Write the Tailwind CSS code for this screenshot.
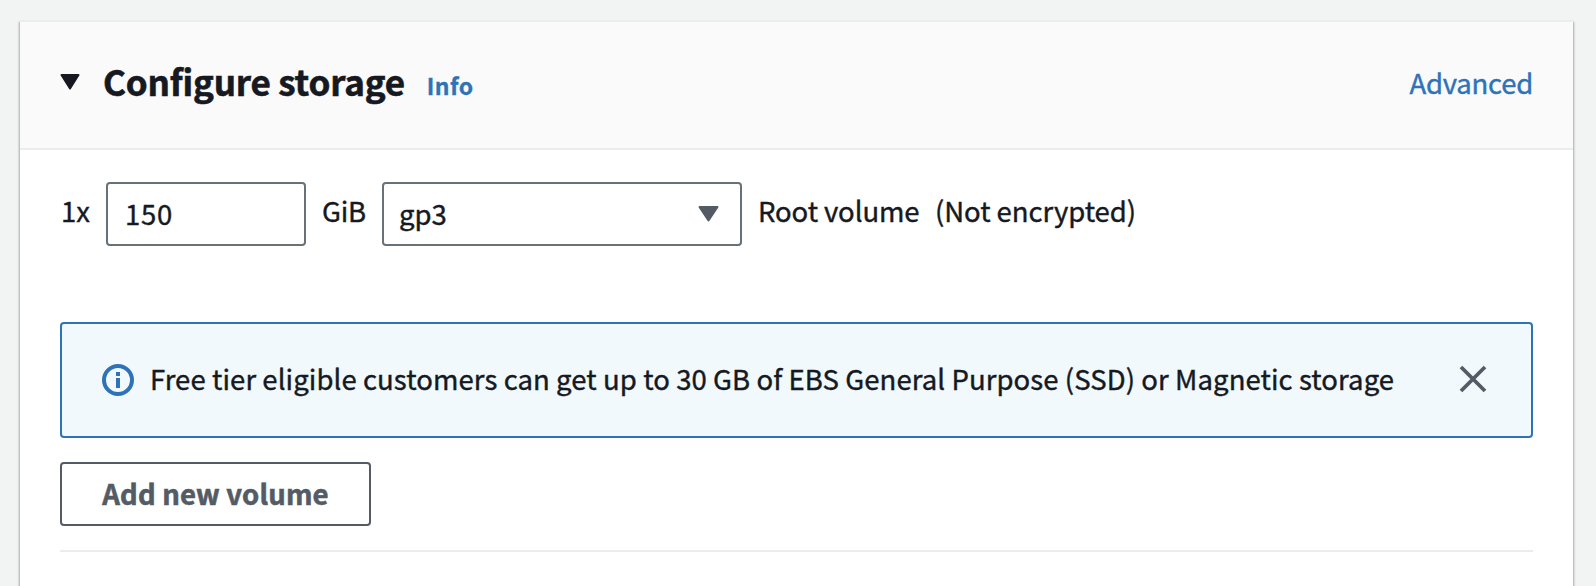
<!DOCTYPE html>
<html lang="en">
<head>
<meta charset="utf-8">
<title>Configure storage</title>
<script src="https://cdn.jsdelivr.net/npm/@tailwindcss/browser@4"></script>
</head>
<body class="h-[586px] overflow-hidden bg-[#f2f3f3] pt-5 pr-[23px] pl-5 font-['Noto_Sans_CJK_SC','Noto_Sans',sans-serif] text-[27.5px] leading-10 text-[#16191f] whitespace-nowrap">
  <section class="h-[566px] border-t-2 border-[#eaeded] bg-white shadow-[1px_2px_2px_rgba(0,28,36,0.3),-1px_2px_2px_rgba(0,28,36,0.3)]">
    <header class="flex h-32 items-center border-b-2 border-[#eaeded] bg-[#fafafa] pr-10 pl-10">
      <svg class="mb-1.5 h-4 w-5 shrink-0" viewBox="0 0 20 16"><path d="M1.5 1h17L10 14.5z" fill="#16191f" stroke="#16191f" stroke-width="2" stroke-linejoin="round"/></svg>
      <h2 class="mb-[9px] ml-[23px] text-[35px] font-bold tracking-[-0.2px] [-webkit-text-stroke:0.6px]">Configure storage</h2>
      <a class="mb-[1px] ml-[22px] text-[23px] font-bold tracking-[0.4px] text-[#2e73b8] [-webkit-text-stroke:0.3px]">Info</a>
      <a class="mb-1.5 ml-auto tracking-[-0.25px] text-[#2e73b8] [-webkit-text-stroke:0.4px]">Advanced</a>
    </header>
    <div class="pr-10 pl-10">
      <div class="flex items-center pt-8 [-webkit-text-stroke:0.4px]">
        <span class="mb-2 w-[46px] pl-px">1x</span>
        <div class="flex h-16 w-[200px] items-center rounded-[4px] border-2 border-[#687078] bg-white pb-0.5 pl-[17px] tracking-[0.8px]">150</div>
        <span class="mb-2 w-[76px] pl-4 tracking-[-0.3px]">GiB</span>
        <div class="flex h-16 w-[360px] items-center justify-between rounded-[4px] border-2 border-[#687078] bg-white pr-[21px] pl-[15px]">
          <span class="mb-[3px]">gp3</span>
          <svg class="h-4 w-[21px]" viewBox="0 0 21 16"><path d="M1.5 1h18l-9 13.5z" fill="#545b64" stroke="#545b64" stroke-width="2" stroke-linejoin="round"/></svg>
        </div>
        <span class="mb-2 ml-4 w-[177px] tracking-[-0.1px]">Root volume</span>
        <span class="mb-2 tracking-[-0.05px]">(Not encrypted)</span>
      </div>
      <div class="mt-[76px] flex h-[116px] items-center rounded-[4px] border-2 border-[#2e73b8] bg-[#f1f9fd] pr-[44px] pl-10">
        <svg class="size-8 shrink-0" viewBox="0 0 32 32" fill="none"><circle cx="16" cy="16" r="14" stroke="#2e73b8" stroke-width="4"/><path d="M14 8h4v4h-4zM14 14h4v10h-4z" fill="#2e73b8"/></svg>
        <p class="mb-1 ml-4 tracking-[0.08px] [-webkit-text-stroke:0.4px]">Free tier eligible customers can get up to 30 GB of EBS General Purpose (SSD) or Magnetic storage</p>
        <svg class="mb-0.5 ml-auto size-7 shrink-0" viewBox="0 0 28 28" fill="none" stroke="#545b64" stroke-width="3.8"><path d="M2 2l24 24M26 2L2 26"/></svg>
      </div>
      <button class="mt-6 flex h-16 w-[311px] items-center justify-center rounded-[4px] border-2 border-[#545b64] bg-white pb-[3px] font-bold tracking-[0.15px] text-[#545b64] [-webkit-text-stroke:0.6px]">Add new volume</button>
      <div class="mt-6 h-0.5 bg-[#eaeded]"></div>
    </div>
  </section>
</body>
</html>
